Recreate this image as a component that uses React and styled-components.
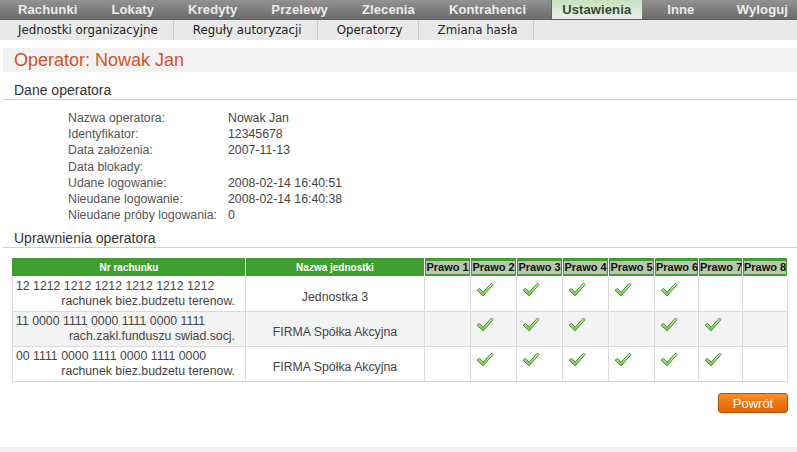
import React from "react";
import styled, { createGlobalStyle } from "styled-components";

const GlobalStyle = createGlobalStyle`
  html, body {
    margin: 0;
    padding: 0;
    background: #fff;
    font-family: "Liberation Sans", Arial, sans-serif;
  }
`;

const Page = styled.div`
  width: 797px;
  min-height: 452px;
  display: flex;
  flex-direction: column;
`;

const TopNav = styled.nav`
  display: flex;
  height: 20px;
  padding-left: 1px;
  background: linear-gradient(#929292, #7c7c7c 55%, #6b6b6b);
  border-bottom: 1px solid #5e5e5e;
  box-sizing: border-box;
`;

const TopItem = styled.a`
  display: flex;
  align-items: center;
  padding: 0 ${p => (p.$active ? "11px" : "17px")};
  margin: 0 ${p => (p.$active ? "8px" : "0")};
  ${p => p.$right && "margin-left: auto; padding-right: 9px;"}
  font-family: "Liberation Sans", Arial, sans-serif;
  font-weight: bold;
  font-size: 13px;
  letter-spacing: 0.12px;
  color: ${p => (p.$active ? "#2f4a2f" : "#ececec")};
  background: ${p =>
    p.$active ? "linear-gradient(#c6e2bb, #dfeadb 60%, #e9eee7)" : "transparent"};
  box-shadow: ${p => (p.$active ? "inset 1px 0 0 #5c6a58" : "none")};
  text-decoration: none;
  cursor: pointer;
`;

const SubNav = styled.div`
  display: flex;
  height: 20px;
  background: #e9e9e9;
`;

const SubItem = styled.a`
  display: flex;
  align-items: center;
  padding: 0 15px 0 ${p => (p.$first ? "18px" : "19px")};
  border-right: 1px solid #cbcbcb;
  font-family: "DejaVu Sans", Tahoma, sans-serif;
  font-size: 11.8px;
  color: #222;
  text-decoration: none;
  cursor: pointer;
`;

const Content = styled.main`
  padding-left: 3px;
  margin-top: 8px;
  display: flex;
  flex-direction: column;
`;

const TitleBar = styled.h1`
  margin: 0;
  height: 24px;
  line-height: 24px;
  padding-left: 11px;
  background: #f2f2f2;
  font-size: 18px;
  font-weight: normal;
  color: #d2522a;
`;

const SectionHead = styled.h2`
  margin: ${p => p.$top}px 0 0;
  padding: 0 0 1px 11px;
  line-height: 16px;
  font-size: 14px;
  font-weight: normal;
  color: #333;
  border-bottom: 1px solid #cfcfcf;
`;

const Details = styled.dl`
  margin: 10px 0 0 65px;
  display: grid;
  grid-template-columns: 160px auto;
  grid-auto-rows: 16.2px;
  font-size: 12.3px;
  line-height: 16px;

  dt { color: #555; }
  dd { margin: 0; color: #444; }
`;

const Table = styled.table`
  margin: 10px 0 0 9px;
  width: 775px;
  table-layout: fixed;
  border-collapse: collapse;
  font-size: 12.3px;
  color: #444;
`;

const HeadCell = styled.th`
  height: ${p => (p.$right ? "13px" : "18px")};
  padding: ${p => (p.$right ? "3px 1px 2px 1px" : "0")};
  background: #3f9e2f;
  border: 1px solid #fff;
  border-top: none;
  border-left: ${p => (p.$firstCol ? "1px solid #3f9e2f" : "1px solid #fff")};
  font-family: "Liberation Sans", Arial, sans-serif;
  font-size: ${p => (p.$right ? "11px" : "10px")};
  line-height: 13px;
  font-weight: bold;
  color: #fff;
  text-align: center;
  white-space: nowrap;
  overflow: hidden;
`;

const RightLabel = styled.span`
  display: block;
  height: 13px;
  line-height: 13px;
  background: #b7c8ae;
  color: #111;
`;

const Row = styled.tr`
  height: 35px;
  background: ${p => (p.$alt ? "#f3f3f3" : "#fff")};
`;

const Cell = styled.td`
  border: 1px solid #dadada;
  padding: 0;
  vertical-align: middle;
`;

const AccountCell = styled(Cell)`
  padding: 2px 10px 2px 3px;
  line-height: 15px;
`;

const AccountNo = styled.div`
  text-align: left;
`;

const AccountName = styled.div`
  text-align: right;
`;

const UnitCell = styled(Cell)`
  text-align: center;
  padding-top: 6px;
`;

const RightCell = styled(Cell)`
  vertical-align: top;
  padding: 5px 0 0 5px;
`;

const ButtonBar = styled.div`
  display: flex;
  justify-content: flex-end;
  margin: 11px 9px 0 0;
`;

const Button = styled.button`
  width: 70px;
  height: 20px;
  padding: 0;
  border: 1px solid #b2520e;
  border-radius: 3px;
  background: linear-gradient(#f7902e, #ee7510 50%, #e36608);
  font-family: "Liberation Sans", Arial, sans-serif;
  font-size: 13px;
  color: #fff;
  cursor: pointer;
`;

const Footer = styled.footer`
  margin-top: auto;
  height: 5px;
  background: #f0f0f0;
`;

const Check = () => (
  <svg width="18" height="15" viewBox="0 0 18 15">
    <defs>
      <linearGradient id="chk" x1="0" y1="0" x2="0" y2="1">
        <stop offset="0" stopColor="#d6f7b4" />
        <stop offset="1" stopColor="#74c64c" />
      </linearGradient>
    </defs>
    <path
      d="M1 8.2 L3.6 6.4 L7 10.3 L15.6 1 L17 2.6 L7.2 13.8 Z"
      fill="url(#chk)"
      stroke="#43902f"
      strokeWidth="1"
      strokeLinejoin="round"
    />
  </svg>
);

const topNav = ["Rachunki", "Lokaty", "Kredyty", "Przelewy", "Zlecenia", "Kontrahenci", "Ustawienia", "Inne"];
const subNav = ["Jednostki organizacyjne", "Reguły autoryzacji", "Operatorzy", "Zmiana hasła"];

const details = [
  ["Nazwa operatora:", "Nowak Jan"],
  ["Identyfikator:", "12345678"],
  ["Data założenia:", "2007-11-13"],
  ["Data blokady:", ""],
  ["Udane logowanie:", "2008-02-14 16:40:51"],
  ["Nieudane logowanie:", "2008-02-14 16:40:38"],
  ["Nieudane próby logowania:", "0"],
];

const colWidths = [233, 179, 46, 46, 46, 46, 46, 44, 44, 45];

const rows = [
  { no: "12 1212 1212 1212 1212 1212 1212", name: "rachunek biez.budzetu terenow.", unit: "Jednostka 3", rights: [2, 3, 4, 5, 6] },
  { no: "11 0000 1111 0000 1111 0000 1111", name: "rach.zakl.funduszu swiad.socj.", unit: "FIRMA Spółka Akcyjna", rights: [2, 3, 4, 6, 7] },
  { no: "00 1111 0000 1111 0000 1111 0000", name: "rachunek biez.budzetu terenow.", unit: "FIRMA Spółka Akcyjna", rights: [2, 3, 4, 5, 6, 7] },
];

export default function App() {
  return (
    <Page>
      <GlobalStyle />
      <TopNav>
        {topNav.map(item => (
          <TopItem key={item} $active={item === "Ustawienia"}>{item}</TopItem>
        ))}
        <TopItem $right>Wyloguj</TopItem>
      </TopNav>
      <SubNav>
        {subNav.map((item, i) => (
          <SubItem key={item} $first={i === 0}>{item}</SubItem>
        ))}
      </SubNav>

      <Content>
        <TitleBar>Operator: Nowak Jan</TitleBar>

        <SectionHead $top={10}>Dane operatora</SectionHead>
        <Details>
          {details.map(([label, value]) => (
            <React.Fragment key={label}>
              <dt>{label}</dt>
              <dd>{value}</dd>
            </React.Fragment>
          ))}
        </Details>

        <SectionHead $top={7}>Uprawnienia operatora</SectionHead>
        <Table>
          <colgroup>
            {colWidths.map((w, i) => <col key={i} width={w} />)}
          </colgroup>
          <thead>
            <tr>
              <HeadCell $firstCol>Nr rachunku</HeadCell>
              <HeadCell>Nazwa jednostki</HeadCell>
              {[1, 2, 3, 4, 5, 6, 7, 8].map(n => (
                <HeadCell key={n} $right>
                  <RightLabel>Prawo {n}</RightLabel>
                </HeadCell>
              ))}
            </tr>
          </thead>
          <tbody>
            {rows.map((row, i) => (
              <Row key={row.no} $alt={i === 1}>
                <AccountCell>
                  <AccountNo>{row.no}</AccountNo>
                  <AccountName>{row.name}</AccountName>
                </AccountCell>
                <UnitCell>{row.unit}</UnitCell>
                {[1, 2, 3, 4, 5, 6, 7, 8].map(n => (
                  <RightCell key={n}>{row.rights.includes(n) && <Check />}</RightCell>
                ))}
              </Row>
            ))}
          </tbody>
        </Table>

        <ButtonBar>
          <Button>Powrót</Button>
        </ButtonBar>
      </Content>
      <Footer />
    </Page>
  );
}
